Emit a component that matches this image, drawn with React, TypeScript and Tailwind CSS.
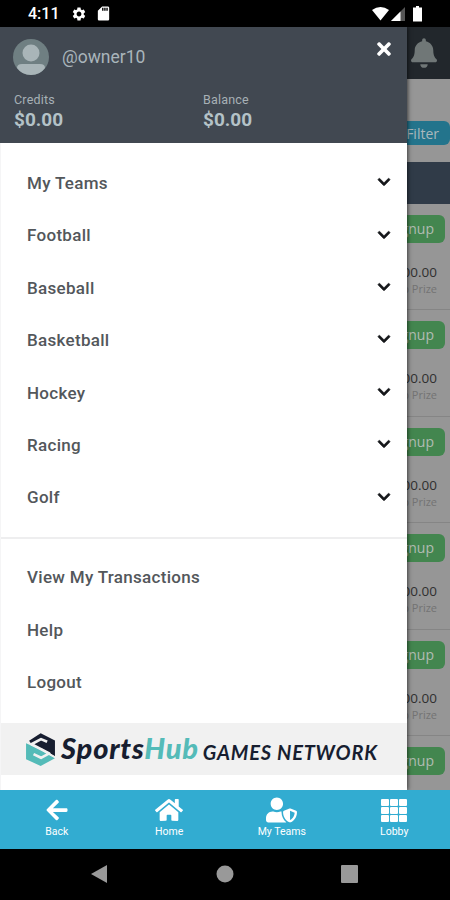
import type { ReactNode } from 'react';
import { FaArrowLeft, FaBell, FaChevronDown, FaHome, FaTimes, FaUserShield } from 'react-icons/fa';
import { MdSdCard, MdSettings } from 'react-icons/md';

const sports = ['My Teams', 'Football', 'Baseball', 'Basketball', 'Hockey', 'Racing', 'Golf'];
const links = ['View My Transactions', 'Help', 'Logout'];

const GridIcon = () => (
  <svg viewBox="0 0 26 23" className="w-[26px] h-[23px]" fill="currentColor">
    {[0, 8, 16].map((y) =>
      [0, 9, 18].map((x) => <rect key={`${x}-${y}`} x={x} y={y} width="8" height="7" rx="1" />)
    )}
  </svg>
);

const StatusBar = () => (
  <div className="flex h-[27px] shrink-0 items-center bg-black pl-7 text-white">
    <span className="w-[43px] pt-px text-[16px] font-medium leading-none">4:11</span>
    <MdSettings className="size-4" />
    <MdSdCard className="ml-[8px] size-[17px]" />
    <svg viewBox="0 0 52 16" className="ml-auto mr-[26px] h-4 w-[52px]">
      <path d="M0 4Q8.500-2 17 4L8.500 14.500Z" fill="white" />
      <path d="M33 1V15H19Z" fill="#555" />
      <path d="M28.500 5.500V15H19Z" fill="white" />
      <path d="M41 1.500H44V0H47V1.500H50V15.500H41Z" fill="white" />
    </svg>
  </div>
);

const Amount = ({ label, className }: { label: string; className: string }) => (
  <div className={className}>
    <p className="text-[12.500px] leading-[15px] tracking-[0.2px] text-[#a7b1b6]">{label}</p>
    <p className="pt-px text-[19px] font-bold leading-[23px] text-[#b4c2c7]">$0.00</p>
  </div>
);

const HubLogo = () => (
  <svg viewBox="0 0 85 97" className="h-[33px] w-[29px] shrink-0">
    <path d="M9 23L43 1L85 22V68L48 46L20 38Z" fill="#171e30" />
    <path d="M0 30L40 48L62 62L85 74L43 97L0 77Z" fill="#54bbb8" />
    <path
      d="M62 26L44 18L16 33L68 60L44 73L22 62"
      fill="none"
      stroke="#f1f1f1"
      strokeWidth="8"
      strokeLinejoin="round"
    />
    <path d="M62 58L87 72" stroke="#f1f1f1" strokeWidth="5" />
  </svg>
);

const Drawer = () => (
  <aside className="relative z-10 flex w-[407px] shrink-0 flex-col border-l border-[#f5f5f6] bg-white shadow-[1px_0_4px_rgba(0,0,0,0.6)]">
    <header className="-ml-px h-[116px] shrink-0 bg-[#414851] pl-[13px] pt-3">
      <div className="flex h-9 items-center">
        <svg viewBox="0 0 36 36" className="size-9">
          <circle cx="18" cy="18" r="18" fill="#6f7f82" />
          <circle cx="18" cy="14" r="8.500" fill="#a9b5b8" />
          <path d="M4 29Q4 25 9 25H27Q32 25 32 29Q27 36 18 36T4 29Z" fill="#a9b5b8" />
        </svg>
        <span className="ml-[13px] text-[17.500px] text-[#a9b5bb]">@owner10</span>
        <FaTimes className="mb-[17px] ml-auto mr-[13px] size-5 text-white" />
      </div>
      <div className="mt-[17px] flex pl-px">
        <Amount label="Credits" className="w-[189px]" />
        <Amount label="Balance" className="flex-1" />
      </div>
    </header>
    <nav className="h-[396px] shrink-0 border-b-2 border-[#eeeeef] pt-[13px]">
      {sports.map((name) => (
        <button key={name} className="flex h-[52.400px] w-full items-center justify-between pl-[26px] pr-4">
          <span className="pt-[3px] text-[17px] font-medium tracking-[0.300px] text-[#53575b]">{name}</span>
          <FaChevronDown className="size-3.5 stroke-[#15171a] stroke-[24px] text-[#15171a]" />
        </button>
      ))}
    </nav>
    <nav className="h-[184px] shrink-0 pt-[13px]">
      {links.map((name) => (
        <button
          key={name}
          className="flex h-[52.400px] w-full items-center pl-[26px] text-[17px] font-medium tracking-[0.300px] text-[#53575b]"
        >
          {name}
        </button>
      ))}
    </nav>
    <div className="flex h-[52px] shrink-0 items-center bg-[#f1f1f1] pl-[25px] font-['Lato',sans-serif] italic text-[#171e30]">
      <HubLogo />
      <span className="-mt-1 ml-[6px] whitespace-nowrap text-[29px] font-black leading-none tracking-[0.800px]">
        Sports<span className="text-[#54bbb8]">Hub</span>
      </span>
      <span className="ml-[4px] mt-[5px] whitespace-nowrap text-[20px] font-bold leading-none tracking-[0.800px]">
        GAMES NETWORK
      </span>
    </div>
  </aside>
);

const Contest = () => (
  <div className="flex h-[106.400px] shrink-0 flex-col items-end border-b border-[#858585] pt-[11px]">
    <span className="mr-[5px] flex h-7 w-20 items-center justify-end rounded-md bg-[#43864f] pb-px pr-[11px] text-[14px] text-[#b1bcb3]">
      Signup
    </span>
    <span className="mr-[13px] mt-5 text-[13.500px] leading-[18px] text-[#303030]">$200.00</span>
    <span className="mr-[13px] mt-px whitespace-nowrap text-[11px] leading-[14px] text-[#737373]">Top Prize</span>
  </div>
);

const LobbyPage = () => (
  <main className="flex flex-1 flex-col overflow-hidden bg-[#969696] font-['Open_Sans',sans-serif]">
    <div className="flex h-[52px] shrink-0 items-center bg-[#22272c] pl-1">
      <FaBell className="h-[30px] w-[26px] text-[#707777]" />
    </div>
    <div className="flex h-[83px] shrink-0 items-start justify-end pt-[42px]">
      <span className="flex h-6 w-20 shrink-0 items-center justify-end rounded-md bg-[#23748c] pr-[11px] text-[14px] text-[#aab8bd]">
        Filter
      </span>
    </div>
    <div className="h-[42px] shrink-0 bg-[#303b48]" />
    {[1, 2, 3, 4, 5, 6].map((id) => (
      <Contest key={id} />
    ))}
  </main>
);

const Tab = ({ label, children }: { label: string; children: ReactNode }) => (
  <button className="flex flex-1 flex-col items-center pl-px pt-2 text-white">
    <span className="flex h-6 items-center">{children}</span>
    <span className="mt-[2px] text-[10.500px] leading-[15px]">{label}</span>
  </button>
);

export default function App() {
  return (
    <div className="flex h-[900px] w-[450px] flex-col overflow-hidden bg-black font-['Roboto',sans-serif]">
      <StatusBar />
      <div className="flex h-[763px] shrink-0 overflow-hidden">
        <Drawer />
        <LobbyPage />
      </div>
      <div className="relative z-20 flex h-[59px] shrink-0 bg-[#32acd1]">
        <Tab label="Back"><FaArrowLeft className="size-6" /></Tab>
        <Tab label="Home"><FaHome className="size-7" /></Tab>
        <Tab label="My Teams"><FaUserShield className="h-[30px] w-[31px]" /></Tab>
        <Tab label="Lobby"><GridIcon /></Tab>
      </div>
      <div className="flex flex-1 items-center justify-center text-[#999]">
        <svg viewBox="0 0 268 18" className="-mt-px h-[18px] w-[268px]" fill="currentColor">
          <path d="M0 9L16 0V18Z" />
          <circle cx="134" cy="9" r="8.500" />
          <rect x="250" y="0" width="17" height="18" rx="1" />
        </svg>
      </div>
    </div>
  );
}
